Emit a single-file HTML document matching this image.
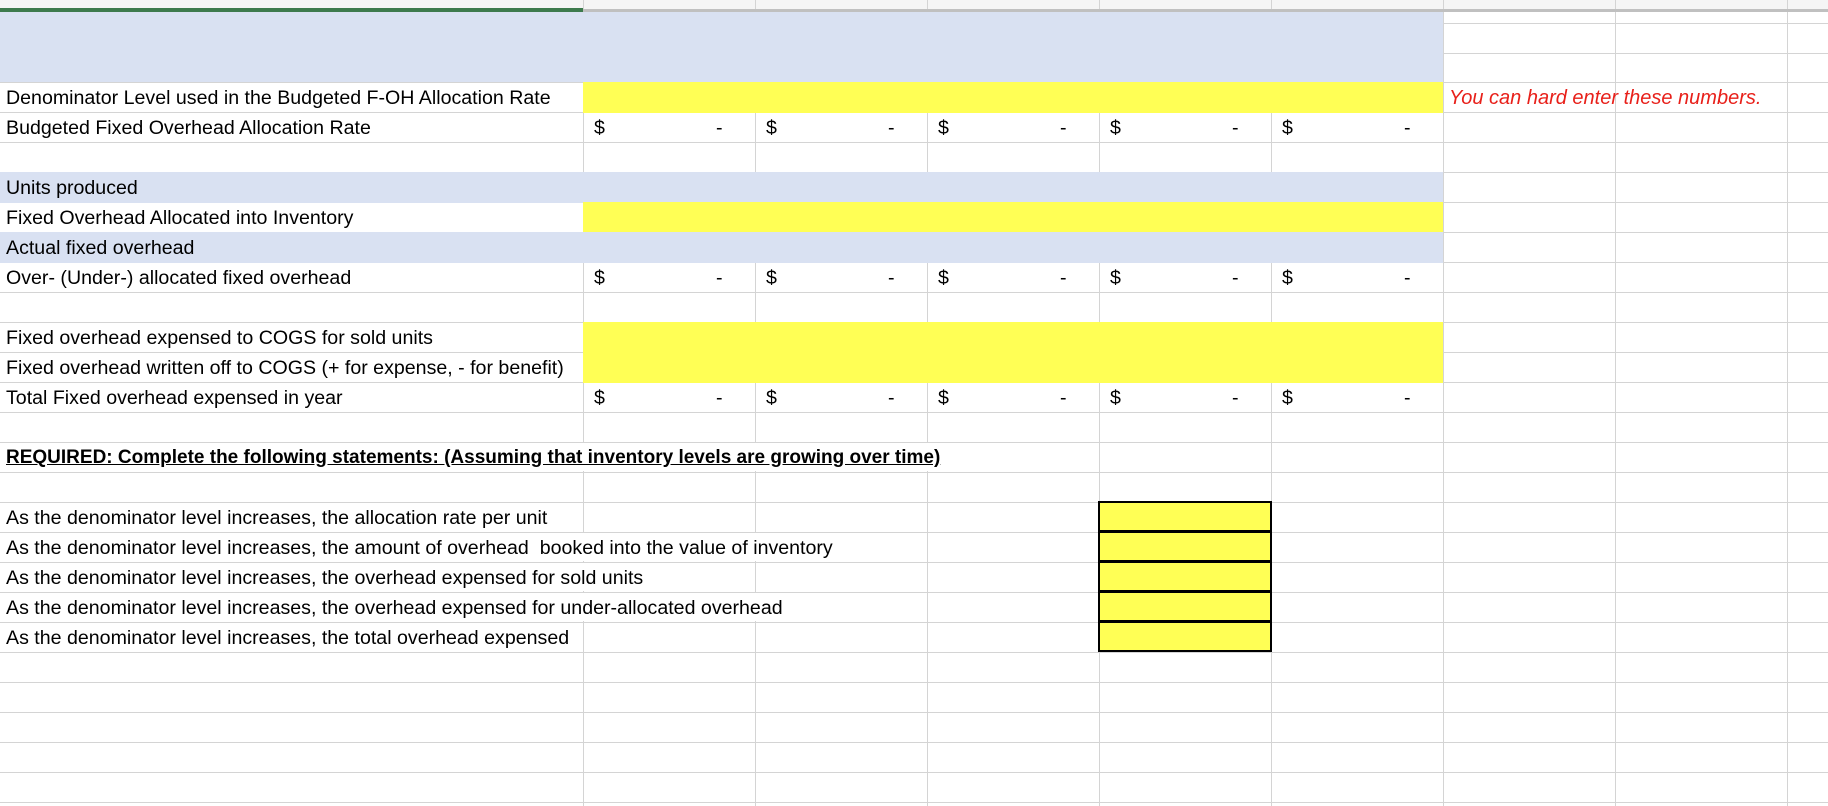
<!DOCTYPE html>
<html><head><meta charset="utf-8">
<style>
*{margin:0;padding:0;box-sizing:border-box}
body{width:1828px;height:806px;position:relative;background:#fff;overflow:hidden;font-family:"Liberation Sans",sans-serif;font-size:19.6px;color:#000}
.h{position:absolute;left:0;width:1828px;height:1px;background:#d4d4d4}
.v{position:absolute;top:0;height:806px;width:1px;background:#d4d4d4}
.f{position:absolute}
.y{background:#ffff55}
.b{background:#d9e1f2}
.t{position:absolute;height:28px;line-height:30px;padding-left:6px;white-space:nowrap}
.w{background:#fff}
.d{position:absolute;height:28px;line-height:30px}
.bx{position:absolute;left:1098px;width:174px;height:31px;border:2px solid #000;background:#ffff55}
</style></head><body>
<div class="f" style="left:0;top:0;width:1828px;height:9px;background:#f5f5f5"></div>
<div class="v" style="left:583px"></div><div class="v" style="left:755px"></div><div class="v" style="left:927px"></div><div class="v" style="left:1099px"></div><div class="v" style="left:1271px"></div><div class="v" style="left:1443px"></div><div class="v" style="left:1615px"></div><div class="v" style="left:1787px"></div>
<div class="h" style="top:23px"></div><div class="h" style="top:53px"></div>
<div class="h" style="top:82px"></div><div class="h" style="top:112px"></div><div class="h" style="top:142px"></div><div class="h" style="top:172px"></div><div class="h" style="top:202px"></div><div class="h" style="top:232px"></div><div class="h" style="top:262px"></div><div class="h" style="top:292px"></div><div class="h" style="top:322px"></div><div class="h" style="top:352px"></div><div class="h" style="top:382px"></div><div class="h" style="top:412px"></div><div class="h" style="top:442px"></div><div class="h" style="top:472px"></div><div class="h" style="top:502px"></div><div class="h" style="top:532px"></div><div class="h" style="top:562px"></div><div class="h" style="top:592px"></div><div class="h" style="top:622px"></div><div class="h" style="top:652px"></div><div class="h" style="top:682px"></div><div class="h" style="top:712px"></div><div class="h" style="top:742px"></div><div class="h" style="top:772px"></div><div class="h" style="top:802px"></div>
<div class="f" style="left:0;top:9px;width:1828px;height:3px;background:#c0c0c0"></div>
<div class="f" style="left:0;top:8px;width:583px;height:4px;background:#3d7a4d"></div>
<div class="f b" style="left:0;top:12px;width:1443px;height:70px"></div>
<div class="f y" style="left:583px;top:82px;width:860px;height:31px"></div>
<div class="f b" style="left:0;top:172px;width:1443px;height:31px"></div>
<div class="f y" style="left:583px;top:202px;width:860px;height:31px"></div>
<div class="f b" style="left:0;top:232px;width:1443px;height:31px"></div>
<div class="f y" style="left:583px;top:322px;width:860px;height:61px"></div>
<div class="t" style="left:0;top:83px">Denominator Level used in the Budgeted F-OH Allocation Rate</div>
<div class="t" style="left:1443px;top:83px;color:#e8201a;font-style:italic;font-size:20px">You can hard enter these numbers.</div>
<div class="t" style="left:0;top:113px">Budgeted Fixed Overhead Allocation Rate</div>
<div class="t" style="left:0;top:173px">Units produced</div>
<div class="t" style="left:0;top:203px">Fixed Overhead Allocated into Inventory</div>
<div class="t" style="left:0;top:233px">Actual fixed overhead</div>
<div class="t" style="left:0;top:263px">Over- (Under-) allocated fixed overhead</div>
<div class="t" style="left:0;top:323px">Fixed overhead expensed to COGS for sold units</div>
<div class="t" style="left:0;top:353px">Fixed overhead written off to COGS (+ for expense, - for benefit)</div>
<div class="t" style="left:0;top:383px">Total Fixed overhead expensed in year</div>
<div class="t w" style="left:0;top:443px;width:952px;font-weight:bold;text-decoration:underline;font-size:19px">REQUIRED: Complete the following statements: (Assuming that inventory levels are growing over time)</div>
<div class="t" style="left:0;top:503px">As the denominator level increases, the allocation rate per unit</div>
<div class="t w" style="left:0;top:533px;width:880px">As the denominator level increases, the amount of overhead&nbsp; booked into the value of inventory</div>
<div class="t w" style="left:0;top:563px;width:700px">As the denominator level increases, the overhead expensed for sold units</div>
<div class="t w" style="left:0;top:593px;width:850px">As the denominator level increases, the overhead expensed for under-allocated overhead</div>
<div class="t" style="left:0;top:623px">As the denominator level increases, the total overhead expensed</div>
<div class="d" style="left:594px;top:113px">$</div><div class="d" style="left:716px;top:113px">-</div>
<div class="d" style="left:766px;top:113px">$</div><div class="d" style="left:888px;top:113px">-</div>
<div class="d" style="left:938px;top:113px">$</div><div class="d" style="left:1060px;top:113px">-</div>
<div class="d" style="left:1110px;top:113px">$</div><div class="d" style="left:1232px;top:113px">-</div>
<div class="d" style="left:1282px;top:113px">$</div><div class="d" style="left:1404px;top:113px">-</div>
<div class="d" style="left:594px;top:263px">$</div><div class="d" style="left:716px;top:263px">-</div>
<div class="d" style="left:766px;top:263px">$</div><div class="d" style="left:888px;top:263px">-</div>
<div class="d" style="left:938px;top:263px">$</div><div class="d" style="left:1060px;top:263px">-</div>
<div class="d" style="left:1110px;top:263px">$</div><div class="d" style="left:1232px;top:263px">-</div>
<div class="d" style="left:1282px;top:263px">$</div><div class="d" style="left:1404px;top:263px">-</div>
<div class="d" style="left:594px;top:383px">$</div><div class="d" style="left:716px;top:383px">-</div>
<div class="d" style="left:766px;top:383px">$</div><div class="d" style="left:888px;top:383px">-</div>
<div class="d" style="left:938px;top:383px">$</div><div class="d" style="left:1060px;top:383px">-</div>
<div class="d" style="left:1110px;top:383px">$</div><div class="d" style="left:1232px;top:383px">-</div>
<div class="d" style="left:1282px;top:383px">$</div><div class="d" style="left:1404px;top:383px">-</div>
<div class="bx" style="top:501px"></div>
<div class="bx" style="top:531px"></div>
<div class="bx" style="top:561px"></div>
<div class="bx" style="top:591px"></div>
<div class="bx" style="top:621px"></div>
</body></html>
